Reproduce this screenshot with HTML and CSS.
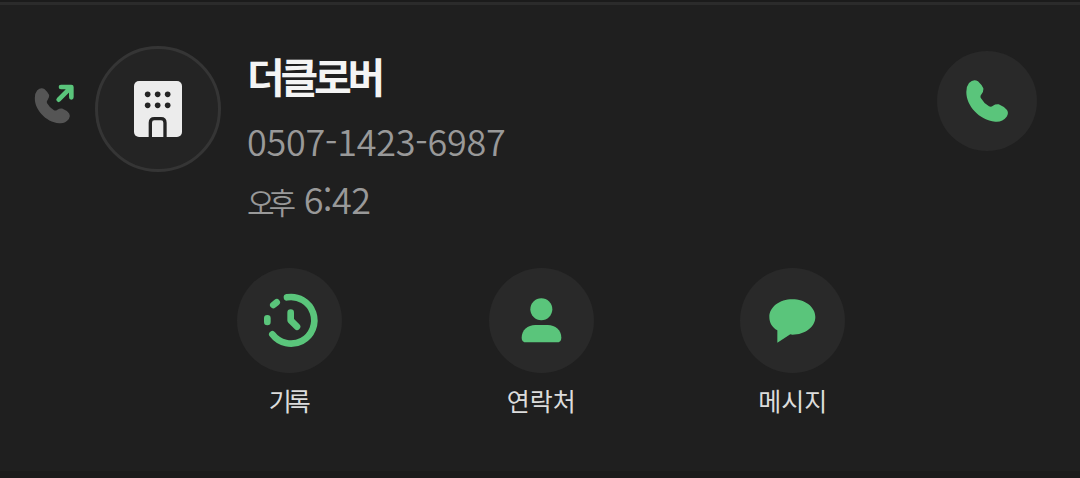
FILE: index.html
```html
<!doctype html>
<html lang="ko">
<head>
  <meta charset="UTF-8">
  <title>통화 기록</title>
  <link rel="stylesheet" href="styles.css">
</head>
<body>
<div class="card">
  <div class="call">
    <svg class="call-type" viewBox="40 160 126 126">
      <path class="handset" transform="translate(-72 61) scale(.845)" d="M147 144Q160 131 174 139Q185 149 190 160Q191 169 185 177Q180 182 182 188Q191 204 207 214Q213 217 219 212Q226 207 236 208Q251 214 261 225Q267 235 260 245Q247 262 226 260C176 255 138 210 139 170Q139 154 147 144Z"/>
      <path class="arrow" d="M117 210L153 174M124 172H155V203"/>
    </svg>
    <div class="avatar">
      <svg viewBox="0 0 144 168">
        <rect width="144" height="168" rx="15" fill="#ececec"/>
        <g fill="#242424">
          <circle cx="41" cy="40" r="8.5"/><circle cx="71" cy="40" r="8.5"/><circle cx="101" cy="40" r="8.5"/>
          <circle cx="41" cy="73" r="8.5"/><circle cx="71" cy="73" r="8.5"/><circle cx="101" cy="73" r="8.5"/>
        </g>
        <path d="M49 168V125Q49 113 61 113H81Q93 113 93 125V168" fill="none" stroke="#242424" stroke-width="10"/>
      </svg>
    </div>
    <div class="info">
      <div class="name">더클로버</div>
      <div class="number">0507-1423-6987</div>
      <div class="time"><span class="ampm">오후</span> 6:42</div>
    </div>
    <div class="dial">
      <svg viewBox="135 132 132 132">
        <path d="M147 144Q160 131 174 139Q185 149 190 160Q191 169 185 177Q180 182 182 188Q191 204 207 214Q213 217 219 212Q226 207 236 208Q251 214 261 225Q267 235 260 245Q247 262 226 260C176 255 138 210 139 170Q139 154 147 144Z"/>
      </svg>
    </div>
  </div>
  <div class="actions">
    <div class="action">
      <div class="round">
        <svg class="line" viewBox="0 0 315 315">
          <path d="M150 88A70 70 0 1 1 106 199"/>
          <path d="M109 111L119 103M91 151V162"/>
          <path d="M161 134V157L180 176"/>
        </svg>
      </div>
      <div class="label">기록</div>
    </div>
    <div class="action">
      <div class="round">
        <svg viewBox="0 0 315 315">
          <circle cx="157" cy="124" r="33"/>
          <path d="M98 209C98 186 116 171 139 171H176C199 171 217 186 217 209Q217 223 203 223H112Q98 223 98 209Z"/>
        </svg>
      </div>
      <div class="label">연락처</div>
    </div>
    <div class="action">
      <div class="round">
        <svg viewBox="0 0 315 315">
          <path d="M157 94C195 94 226 117 226 147C226 177 195 200 157 200L151 199L112 224V187C96 178 88 164 88 147C88 117 119 94 157 94Z"/>
        </svg>
      </div>
      <div class="label">메시지</div>
    </div>
  </div>
</div>
</body>
</html>
```
FILE: styles.css
```css
* {
  box-sizing: border-box;
}
body {
  margin: 0;
  height: 478px;
  padding-top: 2px;
  overflow: hidden;
  background: #1b1b1b;
  font-family: "Noto Sans CJK KR", "Noto Sans", sans-serif;
}
svg {
  display: block;
  fill: #5ac57b;
}
.card {
  height: 469px;
  border-top: 3px solid #2b2b2b;
  background: #1f1f1f;
}
.call {
  display: flex;
  align-items: flex-start;
  height: 263px;
  padding: 41px 43px 0 33px;
}
.call-type {
  width: 42px;
  height: 42px;
  margin-top: 37px;
}
.call-type .handset {
  fill: #555;
}
.call-type .arrow {
  fill: none;
  stroke: #5ac57b;
  stroke-width: 14;
  stroke-linecap: round;
  stroke-linejoin: round;
}
.avatar {
  display: flex;
  align-items: center;
  justify-content: center;
  width: 126px;
  height: 126px;
  margin-left: 20px;
  border: 3px solid #353535;
  border-radius: 50%;
  background: #242424;
}
.avatar svg {
  width: 48px;
  height: 56px;
}
.info {
  flex: 1;
  margin-left: 26px;
  color: #999;
  font-size: 36px;
  font-weight: 350;
  white-space: nowrap;
}
.name {
  height: 66px;
  line-height: 58px;
  color: #f4f4f4;
  font-size: 41px;
  font-weight: 700;
  letter-spacing: -4.2px;
}
.number {
  height: 58px;
  line-height: 56px;
  letter-spacing: -.25px;
}
.time {
  height: 58px;
  line-height: 56px;
  letter-spacing: -.6px;
}
.ampm {
  margin-right: 4px;
  font-size: 30px;
  letter-spacing: -6px;
}
.dial {
  display: flex;
  align-items: center;
  justify-content: center;
  width: 100px;
  height: 100px;
  margin-top: 5px;
  border-radius: 50%;
  background: #292929;
}
.dial svg {
  width: 44px;
  height: 44px;
}
.actions {
  display: grid;
  grid-template-columns: repeat(3, 251.5px);
  padding-left: 164px;
}
.action {
  display: flex;
  flex-direction: column;
  align-items: center;
}
.round {
  width: 105px;
  height: 105px;
  border-radius: 50%;
  background: #292929;
}
.round .line {
  fill: none;
  stroke: #5ac57b;
  stroke-width: 20;
  stroke-linecap: round;
  stroke-linejoin: round;
}
.label {
  margin-top: 7px;
  color: #dcdcdc;
  font-size: 25px;
  line-height: 40px;
  letter-spacing: 0;
}
.action:first-child .label {
  margin-left: -4px;
  letter-spacing: -4px;
}
```
